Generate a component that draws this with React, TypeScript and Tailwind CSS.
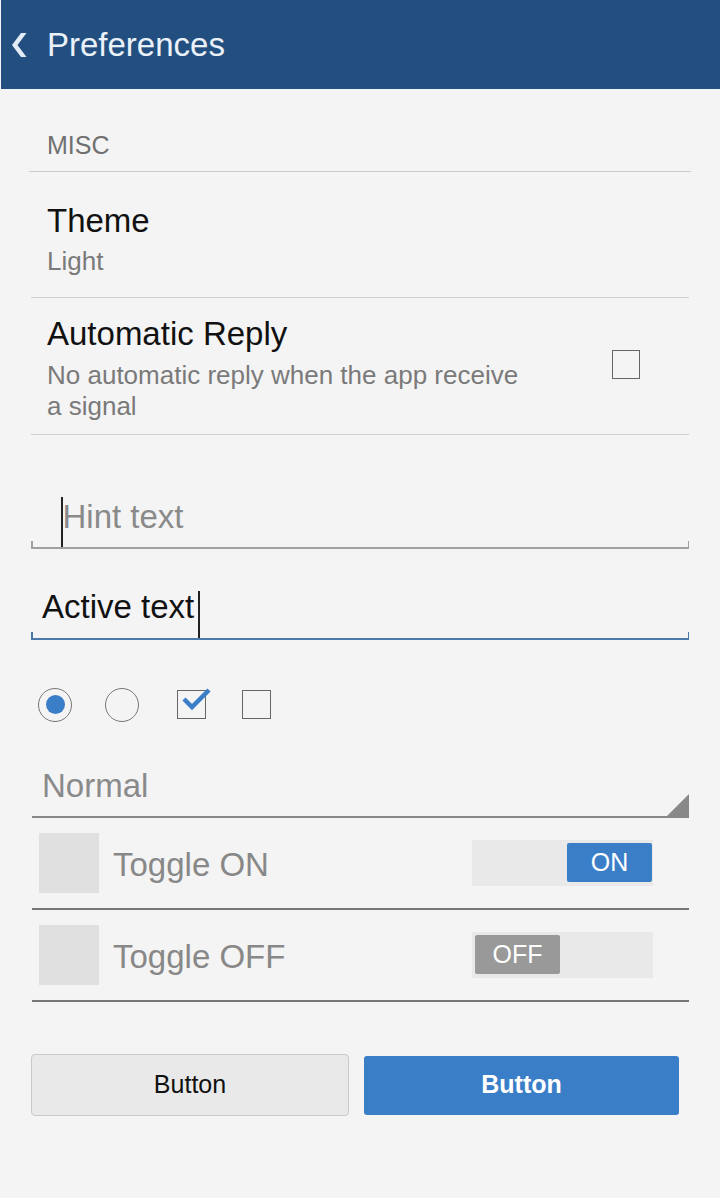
import React from "react";

export default function App() {
  return (
    <div className="min-h-[1198px] w-[720px] bg-[#f4f4f4] font-['Liberation_Sans',Arial,sans-serif]">
      {/* Header */}
      <div className="h-[89px] bg-[#234f80] flex items-center ml-[1px]">
        <svg width="46" height="89" viewBox="0 0 46 89" className="shrink-0">
          <polygon points="20,33 25.5,33 16.5,45 25.5,57 20,57 11,45" fill="#e3ecf6" />
        </svg>
        <span className="text-[33px] leading-[40px] text-[#eaf1f8]">Preferences</span>
      </div>

      {/* MISC */}
      <div className="h-[83px] mx-[29px] border-b-[1.5px] border-[#cccccc] flex items-end pb-[11px] pl-[18px]">
        <span className="text-[25px] leading-[30px] text-[#707070]">MISC</span>
      </div>

      {/* Theme */}
      <div className="mx-[31px] border-b-[1.5px] border-[#d0d0d0] pl-[16px] pt-[30px] pb-[20px]">
        <div className="text-[33px] leading-[38px] text-[#111]">Theme</div>
        <div className="text-[26px] leading-[31px] text-[#7a7a7a] mt-[6px]">Light</div>
      </div>

      {/* Automatic Reply */}
      <div className="mx-[31px] border-b-[1.5px] border-[#d0d0d0] pl-[16px] pt-[17px] pb-[12px] flex items-start">
        <div className="w-[485px]">
          <div className="text-[33px] leading-[38px] text-[#111]">Automatic Reply</div>
          <div className="text-[26px] leading-[31px] text-[#7a7a7a] mt-[7px]">
            No automatic reply when the app receive a signal
          </div>
        </div>
        <div className="ml-[80px] mt-[35px] w-[28px] h-[29px] border-[1.5px] border-[#666] shrink-0" />
      </div>

      {/* Hint input */}
      <div className="relative mt-[62px] mx-[31px] h-[52px] border-b-2 border-[#a0a0a0] flex items-stretch">
        <div className="absolute left-0 bottom-0 w-[1.5px] h-[6px] bg-[#a0a0a0]" />
        <div className="absolute right-0 bottom-0 w-[1.5px] h-[6px] bg-[#a0a0a0]" />
        <span className="ml-[30px] w-[1.5px] bg-[#222]" />
        <span className="self-start text-[33px] leading-[40px] text-[#8a8a8a]">Hint text</span>
      </div>

      {/* Active input */}
      <div className="relative mt-[40px] mx-[31px] h-[51px] border-b-2 border-[#4a78a8] flex items-stretch">
        <div className="absolute left-0 bottom-0 w-[1.5px] h-[6px] bg-[#4a78a8]" />
        <div className="absolute right-0 bottom-0 w-[1.5px] h-[6px] bg-[#4a78a8]" />
        <span className="ml-[11px] self-start text-[33px] leading-[38px] text-[#111] -mt-[1px]">Active text</span>
        <span className="ml-[4px] mt-[2px] w-[1.5px] bg-[#222]" />
      </div>

      {/* Radios & checkboxes */}
      <div className="mt-[48px] flex items-center h-[33px]">
        <div className="ml-[38px] w-[34px] h-[34px] rounded-full border-[1.5px] border-[#777] flex items-center justify-center">
          <div className="w-[19px] h-[19px] rounded-full bg-[#3b7ec8]" />
        </div>
        <div className="ml-[33px] w-[34px] h-[34px] rounded-full border-[1.5px] border-[#777]" />
        <div className="relative ml-[38px] w-[29px] h-[29px] border-[1.5px] border-[#666]">
          <svg width="34" height="30" viewBox="0 0 34 30" className="absolute left-[3px] -top-[3px]">
            <polyline points="3,11 11,19 28,2" fill="none" stroke="#3b7ec8" strokeWidth="4.5" strokeLinejoin="miter" />
          </svg>
        </div>
        <div className="ml-[36px] w-[29px] h-[29px] border-[1.5px] border-[#666]" />
      </div>

      {/* Dropdown */}
      <div className="relative mt-[46px] ml-[32px] mr-[31px] h-[51px] border-b-2 border-[#888] pl-[10px]">
        <span className="text-[33px] leading-[38px] text-[#8a8a8a]">Normal</span>
        <svg width="22" height="22" viewBox="0 0 22 22" className="absolute right-0 bottom-0">
          <polygon points="0,22 22,0 22,22" fill="#888" />
        </svg>
      </div>

      {/* Toggle rows */}
      <div className="ml-[32px] mr-[31px] h-[92px] border-b-2 border-[#777] flex items-center pl-[7px] pr-[36px]">
        <div className="w-[60px] h-[60px] bg-[#e0e0e0]" />
        <span className="ml-[14px] mt-[3px] text-[33px] leading-[38px] text-[#888]">Toggle ON</span>
        <div className="ml-auto w-[181px] h-[46px] bg-[#e9e9e9] flex justify-end items-start pt-[3px] pr-[1px]">
          <div className="w-[85px] h-[39px] bg-[#3b7ec8] rounded-[2px] flex items-center justify-center text-white text-[25px]">
            ON
          </div>
        </div>
      </div>
      <div className="ml-[32px] mr-[31px] h-[92px] border-b-2 border-[#777] flex items-center pl-[7px] pr-[36px]">
        <div className="w-[60px] h-[60px] bg-[#e0e0e0]" />
        <span className="ml-[14px] mt-[3px] text-[33px] leading-[38px] text-[#888]">Toggle OFF</span>
        <div className="ml-auto w-[181px] h-[46px] bg-[#e9e9e9] flex justify-start items-start pt-[3px] pl-[3px]">
          <div className="w-[85px] h-[39px] bg-[#999] rounded-[2px] flex items-center justify-center text-white text-[25px]">
            OFF
          </div>
        </div>
      </div>

      {/* Buttons */}
      <div className="mt-[52px] flex items-center">
        <button className="ml-[31px] w-[318px] h-[62px] bg-[#e9e9e9] border-[1.5px] border-[#c9c9c9] rounded-[4px] text-[25px] text-[#111]">
          Button
        </button>
        <button className="ml-[15px] w-[315px] h-[59px] bg-[#3b7ec8] rounded-[3px] text-[25px] font-bold text-white">
          Button
        </button>
      </div>
    </div>
  );
}
